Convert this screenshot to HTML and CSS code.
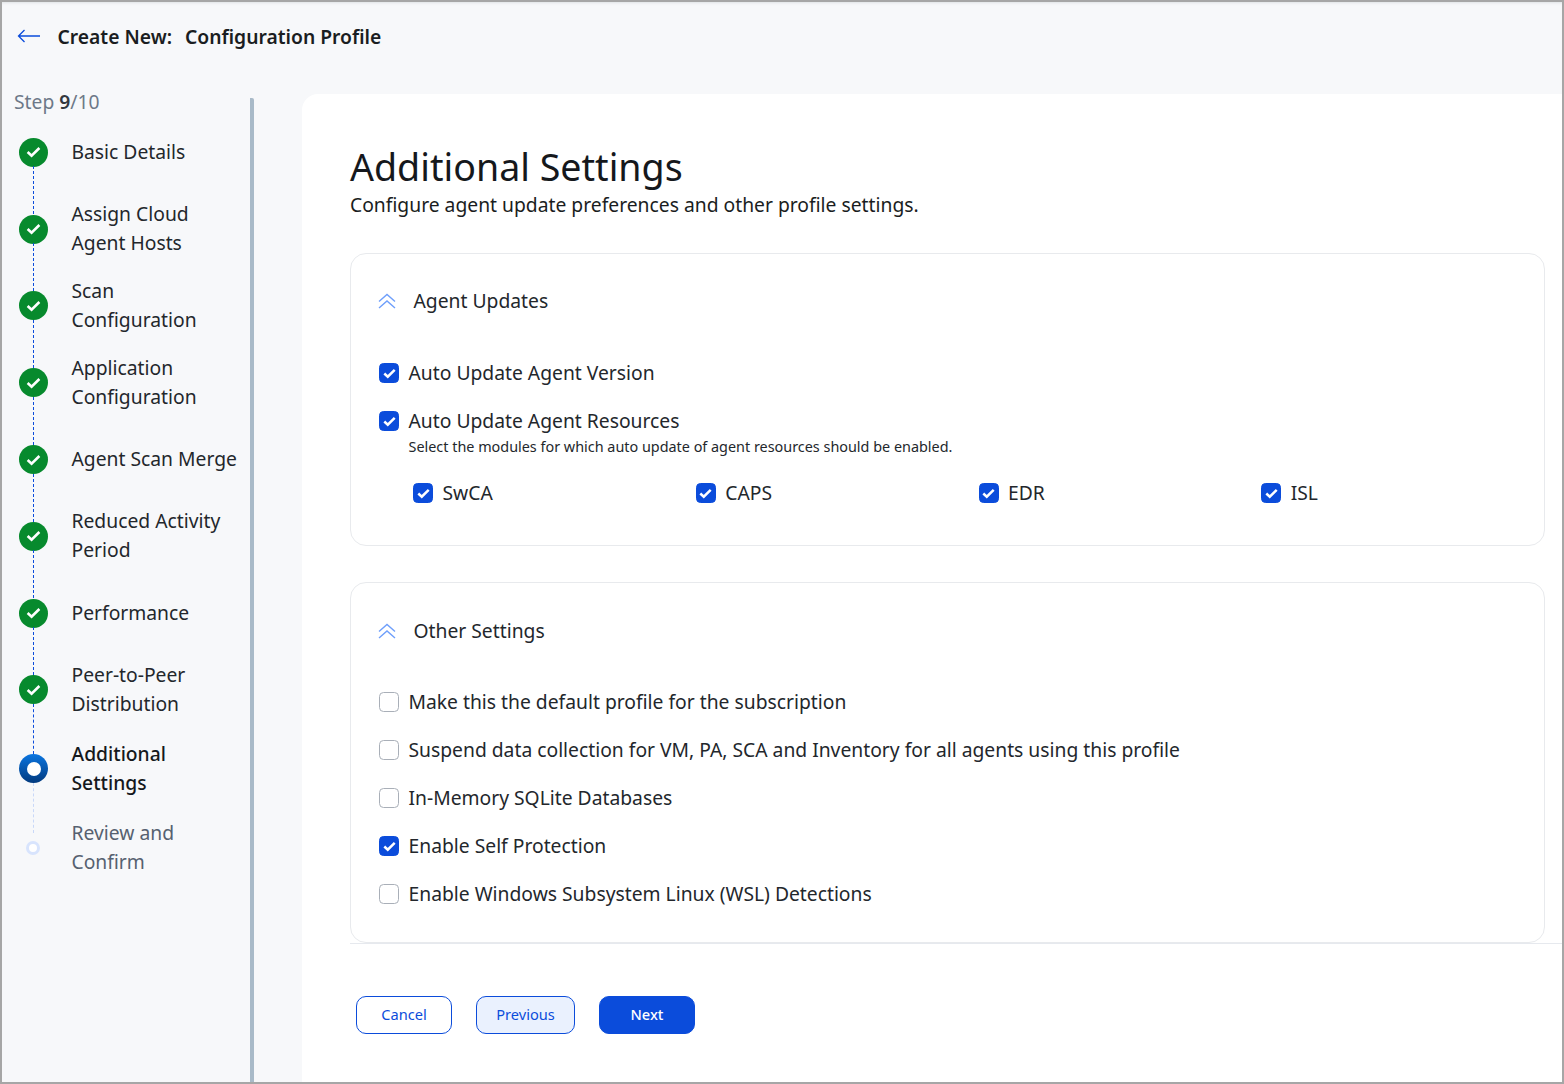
FILE: index.html
```html
<!DOCTYPE html>
<html lang="en">
<head>
  <meta charset="UTF-8">
  <meta name="viewport" content="width=device-width, initial-scale=1.0">
  <title>Create New: Configuration Profile</title>
  <link rel="stylesheet" href="styles.css">
</head>
<body>
  <div class="frame">
    <header class="topbar">
      <svg class="back" width="24" height="14" viewBox="0 0 24 14" fill="none" stroke="#0b4cdb" stroke-width="1.3">
        <path d="M23 7H1.5M7.5 1 1.5 7l6 6"/>
      </svg>
      <h1 class="page-title"><span>Create New:</span> <span>Configuration Profile</span></h1>
    </header>

    <div class="content">
      <aside class="sidebar">
        <div class="step-count">Step <b>9</b>/10</div>
        <ol class="steps">
          <li class="step done"><span class="dot"><svg viewBox="0 0 14 11" fill="none" stroke="#fff" stroke-width="2.4"><path d="M1.5 5.5 5.2 9 12.5 1.8"/></svg></span><span class="step-name">Basic Details</span></li>
          <li class="step done"><span class="dot"><svg viewBox="0 0 14 11" fill="none" stroke="#fff" stroke-width="2.4"><path d="M1.5 5.5 5.2 9 12.5 1.8"/></svg></span><span class="step-name">Assign Cloud<br>Agent Hosts</span></li>
          <li class="step done"><span class="dot"><svg viewBox="0 0 14 11" fill="none" stroke="#fff" stroke-width="2.4"><path d="M1.5 5.5 5.2 9 12.5 1.8"/></svg></span><span class="step-name">Scan<br>Configuration</span></li>
          <li class="step done"><span class="dot"><svg viewBox="0 0 14 11" fill="none" stroke="#fff" stroke-width="2.4"><path d="M1.5 5.5 5.2 9 12.5 1.8"/></svg></span><span class="step-name">Application<br>Configuration</span></li>
          <li class="step done"><span class="dot"><svg viewBox="0 0 14 11" fill="none" stroke="#fff" stroke-width="2.4"><path d="M1.5 5.5 5.2 9 12.5 1.8"/></svg></span><span class="step-name">Agent Scan Merge</span></li>
          <li class="step done"><span class="dot"><svg viewBox="0 0 14 11" fill="none" stroke="#fff" stroke-width="2.4"><path d="M1.5 5.5 5.2 9 12.5 1.8"/></svg></span><span class="step-name">Reduced Activity<br>Period</span></li>
          <li class="step done"><span class="dot"><svg viewBox="0 0 14 11" fill="none" stroke="#fff" stroke-width="2.4"><path d="M1.5 5.5 5.2 9 12.5 1.8"/></svg></span><span class="step-name">Performance</span></li>
          <li class="step done"><span class="dot"><svg viewBox="0 0 14 11" fill="none" stroke="#fff" stroke-width="2.4"><path d="M1.5 5.5 5.2 9 12.5 1.8"/></svg></span><span class="step-name">Peer-to-Peer<br>Distribution</span></li>
          <li class="step current"><span class="dot"></span><span class="step-name">Additional<br>Settings</span></li>
          <li class="step todo"><span class="dot"></span><span class="step-name">Review and<br>Confirm</span></li>
        </ol>
      </aside>

      <main class="panel">
        <h2 class="heading">Additional Settings</h2>
        <p class="subheading">Configure agent update preferences and other profile settings.</p>

        <div class="sections">
          <section class="card card-updates">
            <div class="card-head">
              <svg width="18" height="16" viewBox="0 0 18 16" fill="none" stroke="#6f9ffb" stroke-width="1.4"><path d="M1 8.5 9 1.5l8 7M1 15l8-7 8 7"/></svg>
              <h3>Agent Updates</h3>
            </div>
            <label class="check"><span class="box on"><svg viewBox="0 0 12 10" fill="none" stroke="#fff" stroke-width="2.3"><path d="M1.2 5 4.4 8 10.8 1.6"/></svg></span>Auto Update Agent Version</label>
            <label class="check"><span class="box on"><svg viewBox="0 0 12 10" fill="none" stroke="#fff" stroke-width="2.3"><path d="M1.2 5 4.4 8 10.8 1.6"/></svg></span>Auto Update Agent Resources</label>
            <p class="hint">Select the modules for which auto update of agent resources should be enabled.</p>
            <div class="modules">
              <label class="check"><span class="box on"><svg viewBox="0 0 12 10" fill="none" stroke="#fff" stroke-width="2.3"><path d="M1.2 5 4.4 8 10.8 1.6"/></svg></span>SwCA</label>
              <label class="check"><span class="box on"><svg viewBox="0 0 12 10" fill="none" stroke="#fff" stroke-width="2.3"><path d="M1.2 5 4.4 8 10.8 1.6"/></svg></span>CAPS</label>
              <label class="check"><span class="box on"><svg viewBox="0 0 12 10" fill="none" stroke="#fff" stroke-width="2.3"><path d="M1.2 5 4.4 8 10.8 1.6"/></svg></span>EDR</label>
              <label class="check"><span class="box on"><svg viewBox="0 0 12 10" fill="none" stroke="#fff" stroke-width="2.3"><path d="M1.2 5 4.4 8 10.8 1.6"/></svg></span>ISL</label>
            </div>
          </section>

          <section class="card card-other">
            <div class="card-head">
              <svg width="18" height="16" viewBox="0 0 18 16" fill="none" stroke="#6f9ffb" stroke-width="1.4"><path d="M1 8.5 9 1.5l8 7M1 15l8-7 8 7"/></svg>
              <h3>Other Settings</h3>
            </div>
            <label class="check"><span class="box"></span>Make this the default profile for the subscription</label>
            <label class="check"><span class="box"></span>Suspend data collection for VM, PA, SCA and Inventory for all agents using this profile</label>
            <label class="check"><span class="box"></span>In-Memory SQLite Databases</label>
            <label class="check"><span class="box on"><svg viewBox="0 0 12 10" fill="none" stroke="#fff" stroke-width="2.3"><path d="M1.2 5 4.4 8 10.8 1.6"/></svg></span>Enable Self Protection</label>
            <label class="check"><span class="box"></span>Enable Windows Subsystem Linux (WSL) Detections</label>
          </section>
        </div>

        <div class="actions">
          <button class="btn btn-cancel">Cancel</button>
          <button class="btn btn-prev">Previous</button>
          <button class="btn btn-next">Next</button>
        </div>
      </main>
    </div>
  </div>
</body>
</html>
```

FILE: styles.css
```css
* {
  box-sizing: border-box;
}

body {
  margin: 0;
  font-family: "Noto Sans", sans-serif;
  color: #1a1d21;
  background: #f7f8fa;
}

.frame {
  width: 1564px;
  height: 1084px;
  border: 2px solid #a6a6a6;
  overflow: hidden;
  display: flex;
  flex-direction: column;
  background: #f7f8fa;
}

.topbar {
  height: 92px;
  flex: none;
  display: flex;
  align-items: flex-start;
  padding: 21px 0 0 15px;
  gap: 16.5px;
  box-shadow: inset 0 3px 3px -2px #dfe2e5;
}

.back {
  margin-top: 6px;
}

.page-title {
  margin: 0;
  font-size: 19.3px;
  line-height: 28px;
  font-weight: 600;
  display: flex;
  gap: 13px;
}

.content {
  flex: 1;
  display: flex;
  min-height: 0;
}

.sidebar {
  width: 252px;
  flex: none;
  border-right: 4px solid #a9bac8;
  border-top-right-radius: 2px;
  margin-top: 4px;
  padding-left: 12px;
}

.step-count {
  height: 24px;
  margin-top: -8px;
  font-size: 19.3px;
  line-height: 24px;
  color: #6d7988;
}

.step-count b {
  font-weight: 600;
  color: #33383f;
}

.steps {
  list-style: none;
  margin: 0;
  padding: 0;
}

.step {
  position: relative;
  height: 76.8px;
  display: flex;
  align-items: center;
  font-size: 19.3px;
  line-height: 29px;
  color: #23272c;
}

.step-name {
  margin-top: -2px;
}

.step.current {
  height: 81px;
  font-weight: 500;
  color: #15181c;
}

.step.todo {
  color: #566170;
}

.dot {
  width: 29px;
  height: 29px;
  margin-left: 5px;
  margin-right: 23.5px;
  flex: none;
  border-radius: 50%;
  display: flex;
  align-items: center;
  justify-content: center;
}

.dot svg {
  width: 15px;
  height: 12px;
}

.done .dot {
  background: #078a2d;
}

.current .dot {
  background: linear-gradient(#0a75e0, #023a7e);
}

.current .dot::before {
  content: "";
  width: 14px;
  height: 14px;
  border-radius: 50%;
  background: #fff;
}

.todo .dot {
  width: 14px;
  height: 14px;
  margin-left: 12px;
  margin-right: 31.5px;
  background: #fff;
  border: 3px solid #d8e4fd;
}

/* connector between steps */
.step::after {
  content: "";
  position: absolute;
  left: 19px;
  top: calc(50% + 14px);
  height: 48px;
  border-left: 1px dashed #0b4cdb;
}

.step:nth-child(8)::after {
  height: 50px;
}

.current::after {
  height: 50px;
  border-left-color: #c9d8f8;
}

.todo::after {
  display: none;
}

.panel {
  flex: 1;
  margin-left: 48px;
  padding: 48px 0 0 48px;
  background: #fff;
  border-top-left-radius: 16px;
}

.heading {
  margin: 0;
  font-size: 37.6px;
  line-height: 50px;
  font-weight: 400;
  color: #15181c;
}

.subheading {
  margin: 0;
  font-size: 19.3px;
  line-height: 26px;
  color: #1a1d21;
}

.sections {
  margin-top: 35px;
  padding-right: 17px;
  border-bottom: 1px solid #e6e9ee;
}

.card {
  border: 1px solid #e8eaed;
  border-radius: 16px;
  padding-left: 28px;
}

.card-updates {
  height: 293px;
  margin-bottom: 36px;
}

.card-other {
  height: 361px;
}

.card-head {
  height: 95px;
  display: flex;
  align-items: center;
  gap: 18px;
  margin-left: -1.5px;
}

.card-updates .card-head {
  height: 93px;
  margin-bottom: 2px;
}

.card-head h3 {
  margin: 0;
  font-size: 19.3px;
  font-weight: 400;
  color: #23272c;
}

.check {
  height: 48px;
  padding-bottom: 2px;
  display: flex;
  align-items: center;
  gap: 9.5px;
  font-size: 19.3px;
  color: #23272c;
}

.box {
  width: 20px;
  height: 20px;
  margin-top: 2px;
  flex: none;
  border-radius: 4.5px;
  border: 1px solid #a9afb8;
  background: #fff;
  display: flex;
  align-items: center;
  justify-content: center;
}

.box svg {
  width: 13px;
  height: 11px;
}

.box.on {
  background: #0b4cdb;
  border-color: #0b4cdb;
}

.hint {
  margin: -8px 0 0 29.5px;
  font-size: 14.4px;
  line-height: 20px;
  color: #23272c;
}

.modules {
  display: grid;
  grid-template-columns: repeat(4, 1fr);
  padding-left: 34px;
  margin-top: 12px;
}

.actions {
  display: flex;
  gap: 24px;
  margin: 52px 0 0 6px;
}

.btn {
  height: 38px;
  width: 96px;
  padding: 0 0 2px;
  border-radius: 10px;
  border: 1px solid #0b4cdb;
  background: #fff;
  color: #0b4cdb;
  font-family: inherit;
  font-size: 14.6px;
}

.btn-prev {
  width: 99px;
  background: #eaf1fe;
}

.btn-next {
  background: #0b4cdb;
  color: #fff;
  font-weight: 500;
}
```
